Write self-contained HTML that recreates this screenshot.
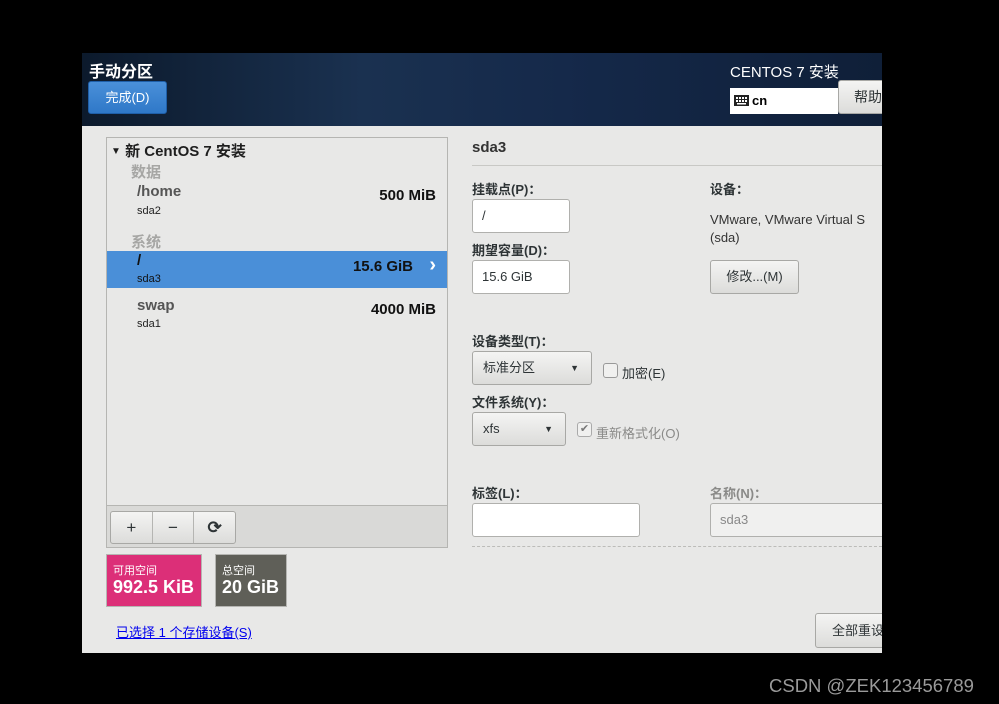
<!DOCTYPE html>
<html><head><meta charset="utf-8"><style>
*{margin:0;padding:0;box-sizing:border-box}
body{width:999px;height:704px;background:#000;position:relative;overflow:hidden;font-family:"Liberation Sans","Noto Sans CJK SC",sans-serif;color:#2e3436}
.a{position:absolute}
#scr{left:82px;top:53px;width:800px;height:600px;background:#e8e8e7;overflow:hidden}
#hdr{left:0;top:0;width:800px;height:73px;background:linear-gradient(90deg,#0c1a2c 0%,#1a3150 35%,#15294a 60%,#0f1f38 100%)}
.btn{background:linear-gradient(#f4f4f3,#dcdcda);border:1px solid #a8a8a5;border-radius:3px;font-size:13px;color:#2e3436;text-align:center}
.inp{background:#fff;border:1px solid #b0b0ad;border-radius:3px;font-size:13px;padding-left:9px}
.lbl{font-size:13px;font-weight:bold;color:#2e3436}
</style></head><body>
<div id="scr" class="a">
 <div id="hdr" class="a">
  <div class="a" style="left:7px;top:5px;color:#fff;font-size:16px;font-weight:bold">手动分区</div>
  <div class="a" style="left:6px;top:28px;width:79px;height:33px;background:linear-gradient(#4a90d9,#2f78c8);border:1px solid #1f5fa8;border-radius:3px;color:#fff;font-size:13px;text-align:center;line-height:31px">完成(D)</div>
  <div class="a" style="left:648px;top:8px;color:#fff;font-size:15px">CENTOS 7 安装</div>
  <div class="a" style="left:648px;top:35px;width:108px;height:26px;background:#fff;font-size:13px;font-weight:bold;line-height:26px;padding-left:22px;color:#000">cn
   <svg class="a" style="left:4px;top:7px" width="15" height="11"><rect width="15" height="11" fill="#222"/><g fill="#fff"><rect x="2" y="2" width="2" height="2"/><rect x="5" y="2" width="2" height="2"/><rect x="8" y="2" width="2" height="2"/><rect x="11" y="2" width="2" height="2"/><rect x="2" y="5" width="2" height="2"/><rect x="5" y="5" width="2" height="2"/><rect x="8" y="5" width="2" height="2"/><rect x="11" y="5" width="2" height="2"/><rect x="3" y="8" width="9" height="1.5"/></g></svg></div>
  <div class="a btn" style="left:756px;top:27px;width:60px;height:34px;line-height:32px;text-align:left;padding-left:15px;font-size:14px">帮助</div>
 </div>
 <div class="a" style="left:24px;top:84px;width:342px;height:411px;border:1px solid #b5b5b2;background:#e8e8e7">
  <div class="a" style="left:4px;top:2px;font-size:15px;font-weight:bold;color:#1e1e1e"><span style="font-size:10px;vertical-align:2px">▼</span> 新 CentOS 7 安装</div>
  <div class="a" style="left:24px;top:23px;font-size:15px;font-weight:bold;color:#a6a6a4">数据</div>
  <div class="a" style="left:30px;top:45px;font-size:15px;font-weight:bold;color:#555">/home</div>
  <div class="a" style="left:30px;top:67px;font-size:11px;color:#222">sda2</div>
  <div class="a" style="right:11px;top:49px;font-size:15px;font-weight:bold;color:#111">500 MiB</div>
  <div class="a" style="left:24px;top:93px;font-size:15px;font-weight:bold;color:#a6a6a4">系统</div>
  <div class="a" style="left:0;top:113px;width:340px;height:37px;background:#4a8fd8"></div>
  <div class="a" style="left:30px;top:114px;font-size:15px;font-weight:bold;color:#111">/</div>
  <div class="a" style="left:30px;top:135px;font-size:11px;color:#111">sda3</div>
  <div class="a" style="right:34px;top:120px;font-size:15px;font-weight:bold;color:#111">15.6 GiB</div>
  <div class="a" style="right:11px;top:116px;font-size:20px;font-weight:bold;color:#fff">›</div>
  <div class="a" style="left:30px;top:159px;font-size:15px;font-weight:bold;color:#555">swap</div>
  <div class="a" style="left:30px;top:180px;font-size:11px;color:#222">sda1</div>
  <div class="a" style="right:11px;top:163px;font-size:15px;font-weight:bold;color:#111">4000 MiB</div>
  <div class="a" style="left:0;top:367px;width:340px;height:42px;background:#d9d9d7;border-top:1px solid #b5b5b2"></div>
  <div class="a btn" style="left:3px;top:373px;width:126px;height:33px;display:flex;font-size:17px">
   <div style="flex:1;border-right:1px solid #b5b5b2;line-height:31px">+</div>
   <div style="flex:1;border-right:1px solid #b5b5b2;line-height:31px">−</div>
   <div style="flex:1;line-height:31px;font-weight:bold">⟳</div></div>
 </div>
 <div class="a" style="left:24px;top:501px;width:96px;height:53px;background:#dc2f78;border:1px solid #b5b5b2;color:#fff">
  <div class="a" style="left:6px;top:7px;font-size:11px">可用空间</div>
  <div class="a" style="left:6px;top:22px;font-size:18px;font-weight:bold">992.5 KiB</div></div>
 <div class="a" style="left:133px;top:501px;width:72px;height:53px;background:#5f5f58;border:1px solid #b5b5b2;color:#fff">
  <div class="a" style="left:6px;top:7px;font-size:11px">总空间</div>
  <div class="a" style="left:6px;top:22px;font-size:18px;font-weight:bold">20 GiB</div></div>
 <div class="a" style="left:34px;top:569px;font-size:13px;color:#00e;text-decoration:underline">已选择 1 个存储设备(S)</div>
 <div class="a" style="left:390px;top:86px;font-size:15px;font-weight:bold;color:#333">sda3</div>
 <div class="a" style="left:390px;top:112px;width:410px;height:1px;background:#c8c8c5"></div>
 <div class="a lbl" style="left:390px;top:126px">挂载点(P)：</div>
 <div class="a inp" style="left:390px;top:146px;width:98px;height:34px;line-height:32px">/</div>
 <div class="a lbl" style="left:390px;top:187px">期望容量(D)：</div>
 <div class="a inp" style="left:390px;top:207px;width:98px;height:34px;line-height:32px">15.6 GiB</div>
 <div class="a lbl" style="left:628px;top:126px">设备：</div>
 <div class="a" style="left:628px;top:158px;font-size:13px;line-height:18px;color:#333">VMware, VMware Virtual S<br>(sda)</div>
 <div class="a btn" style="left:628px;top:207px;width:89px;height:34px;line-height:32px">修改...(M)</div>
 <div class="a lbl" style="left:390px;top:278px">设备类型(T)：</div>
 <div class="a btn" style="left:390px;top:298px;width:120px;height:34px;line-height:32px;text-align:left;padding-left:10px">标准分区<span class="a" style="right:12px;top:0;font-size:9px">▼</span></div>
 <div class="a" style="left:521px;top:310px;width:15px;height:15px;border:1px solid #999;border-radius:3px;background:#f0f0ef"></div>
 <div class="a" style="left:540px;top:310px;font-size:13px">加密(E)</div>
 <div class="a lbl" style="left:390px;top:339px">文件系统(Y)：</div>
 <div class="a btn" style="left:390px;top:359px;width:94px;height:34px;line-height:32px;text-align:left;padding-left:10px">xfs<span class="a" style="right:12px;top:0;font-size:9px">▼</span></div>
 <div class="a" style="left:495px;top:369px;width:15px;height:15px;border:1px solid #aaa;border-radius:3px;background:#f0f0ef;font-size:11px;color:#777;text-align:center;line-height:13px">✔</div>
 <div class="a" style="left:514px;top:370px;font-size:13px;color:#8a8a88">重新格式化(O)</div>
 <div class="a lbl" style="left:390px;top:430px">标签(L)：</div>
 <div class="a inp" style="left:390px;top:450px;width:168px;height:34px"></div>
 <div class="a lbl" style="left:628px;top:430px;color:#8a8a88">名称(N)：</div>
 <div class="a inp" style="left:628px;top:450px;width:190px;height:34px;background:#f0f0ef;color:#888;line-height:32px">sda3</div>
 <div class="a" style="left:390px;top:493px;width:410px;border-top:1px dashed #bcbcb9"></div>
 <div class="a btn" style="left:733px;top:560px;width:90px;height:35px;line-height:33px;text-align:left;padding-left:16px">全部重设</div>
</div>
<div class="a" style="left:769px;top:675px;font-size:18.5px;color:#9a9a9a">CSDN @ZEK123456789</div>
</body></html>
